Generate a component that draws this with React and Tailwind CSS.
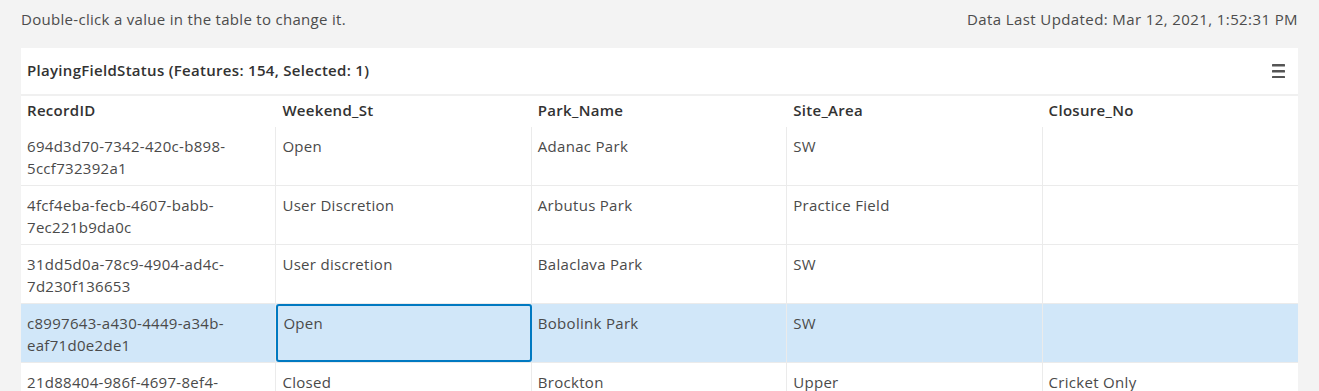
import React from "react";

const rows = [
  ["694d3d70-7342-420c-b898-5ccf732392a1", "Open", "Adanac Park", "SW", ""],
  ["4fcf4eba-fecb-4607-babb-7ec221b9da0c", "User Discretion", "Arbutus Park", "Practice Field", ""],
  ["31dd5d0a-78c9-4904-ad4c-7d230f136653", "User discretion", "Balaclava Park", "SW", ""],
  ["c8997643-a430-4449-a34b-eaf71d0e2de1", "Open", "Bobolink Park", "SW", ""],
  ["21d88404-986f-4697-8ef4-1a2b3c4d5e6f", "Closed", "Brockton", "Upper", "Cricket Only"],
];

const headers = ["RecordID", "Weekend_St", "Park_Name", "Site_Area", "Closure_No"];

export default function App() {
  return (
    <div
      className="w-[1319px] h-[391px] overflow-hidden bg-[#f3f3f3] text-[#4a4a4a] tracking-[0.3px]"
      style={{ fontFamily: "'Open Sans', 'Noto Sans', sans-serif" }}
    >
      <div className="flex justify-between items-center px-[21px] h-[38px] text-[15px] text-[#4c4c4c]">
        <span>Double-click a value in the table to change it.</span>
        <span className="tracking-[0.4px]">Data Last Updated: Mar 12, 2021, 1:52:31 PM</span>
      </div>
      <div className="mx-[21px] mt-[10px] bg-white">
        <div className="flex items-center justify-between h-[46px] pl-[6px] pr-[12px] pb-[1px] text-[15px] font-semibold text-[#323232]">
          <span>PlayingFieldStatus (Features: 154, Selected: 1)</span>
          <svg width="14" height="15" viewBox="0 0 14 15">
            <rect x="0" y="1" width="13" height="2.5" fill="#555" rx="0.5" />
            <rect x="0" y="7" width="13" height="2.5" fill="#555" rx="0.5" />
            <rect x="0" y="13" width="13" height="2.5" fill="#555" rx="0.5" />
          </svg>
        </div>
        <div className="h-[2px] bg-[#f0f0f0]" />
        <div className="grid grid-cols-5 h-[31px] items-center pb-[2px] text-[15px] font-semibold text-[#323232]">
          {headers.map((h) => (
            <div key={h} className="pl-[6px]">{h}</div>
          ))}
        </div>
        {rows.map((r, i) => {
          const selected = i === 3;
          return (
            <div
              key={i}
              className={`grid grid-cols-5 h-[59px] border-b border-[#ebebeb] text-[15px] leading-[22px] ${selected ? "bg-[#d1e7f9]" : "bg-white"}`}
            >
              {r.map((c, j) => {
                const active = selected && j === 1;
                return (
                  <div
                    key={j}
                    className={
                      active
                        ? "overflow-hidden border-2 border-[#0079c1] rounded-[3px] pl-[5px] pr-[5px] pt-[6px]"
                        : `overflow-hidden pt-[8px] pl-[6px] pr-[6px] ${j < 4 ? "border-r border-[#ebebeb]" : ""}`
                    }
                  >
                    {c}
                  </div>
                );
              })}
            </div>
          );
        })}
      </div>
    </div>
  );
}
